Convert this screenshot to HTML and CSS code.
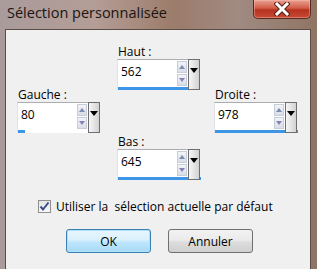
FILE: index.html
```html
<!DOCTYPE html>
<html lang="fr">
<head>
  <meta charset="UTF-8">
  <title>Sélection personnalisée</title>
  <link rel="stylesheet" href="styles.css">
</head>
<body>

  <div class="window">
    <div class="titlebar">
      <span class="title">Sélection personnalisée</span>
      <button class="close-btn" type="button">
        <svg width="16" height="14" viewBox="0 0 16 14">
          <path d="M3 2 L13 12 M13 2 L3 12" stroke="#5a1d14" stroke-width="5" stroke-linecap="square"/>
          <path d="M3 2 L13 12 M13 2 L3 12" stroke="#ffffff" stroke-width="3" stroke-linecap="square"/>
        </svg>
      </button>
    </div>

    <div class="panel">
      <div class="fields">
        <div class="field haut">
          <label for="haut">Haut :</label>
          <div class="spin">
            <div class="box">
              <input type="text" id="haut" value="562">
              <div class="arrows"><span class="up"></span><span class="down"></span></div>
            </div>
            <span class="drop"></span>
          </div>
          <div class="bar"><span style="width: 100%"></span></div>
        </div>

        <div class="field gauche">
          <label for="gauche">Gauche :</label>
          <div class="spin">
            <div class="box">
              <input type="text" id="gauche" value="80">
              <div class="arrows"><span class="up"></span><span class="down"></span></div>
            </div>
            <span class="drop"></span>
          </div>
          <div class="bar"><span style="width: 10%"></span></div>
        </div>

        <div class="field droite">
          <label for="droite">Droite :</label>
          <div class="spin">
            <div class="box">
              <input type="text" id="droite" value="978">
              <div class="arrows"><span class="up"></span><span class="down"></span></div>
            </div>
            <span class="drop"></span>
          </div>
          <div class="bar wide"><span style="width: 100%"></span></div>
        </div>

        <div class="field bas">
          <label for="bas">Bas :</label>
          <div class="spin">
            <div class="box">
              <input type="text" id="bas" value="645">
              <div class="arrows"><span class="up"></span><span class="down"></span></div>
            </div>
            <span class="drop"></span>
          </div>
          <div class="bar wide"><span style="width: 100%"></span></div>
        </div>
      </div>

      <label class="check">
        <span class="checkbox">
          <svg width="11" height="11" viewBox="0 0 11 11"><path d="M1.5 5.5 L4 8.5 L9.5 1.5" fill="none" stroke="#3b4d8a" stroke-width="2"/></svg>
        </span>
        Utiliser la&nbsp; sélection actuelle par défaut
      </label>

      <div class="buttons">
        <button type="button" class="btn default">OK</button>
        <button type="button" class="btn">Annuler</button>
      </div>
    </div>
  </div>

</body>
</html>
```

FILE: styles.css
```css
body {
  margin: 0;
  padding: 0;
  font-family: "Open Sans", "Noto Sans", sans-serif;
  font-size: 12px;
  color: #000;
}

.window {
  width: 317px;
  height: 269px;
  overflow: hidden;
  background: linear-gradient(90deg, #a99b9c 0%, #b49d96 30%, #9c7c6a 55%, #a08a82 75%, #8f7563 100%);
  display: flex;
  flex-direction: column;
}

.titlebar {
  height: 29px;
  display: flex;
  align-items: flex-start;
  justify-content: space-between;
  flex-shrink: 0;
}

.title {
  margin: 3px 0 0 7px;
  font-family: "Open Sans", sans-serif;
  font-size: 14.5px;
  color: #1a1412;
}

.close-btn {
  width: 58px;
  height: 19px;
  margin-right: 6px;
  padding: 0;
  border: 1px solid #5a2a22;
  border-top: none;
  border-radius: 0 0 5px 5px;
  background: linear-gradient(#e8a193 0%, #d25d48 45%, #b5321f 55%, #c84a33 100%);
  display: flex;
  align-items: center;
  justify-content: center;
  box-shadow: inset 0 0 0 1px rgba(255, 200, 190, 0.4);
}

.panel {
  flex: 1;
  margin: 0 6px 0 5px;
  background: #f0f0f0;
  border: 1px solid #5a4c46;
  border-bottom: none;
  display: flex;
  flex-direction: column;
}

.fields {
  display: grid;
  grid-template-columns: 100px 97px 83px;
  grid-template-rows: 43px 45px 40px;
  padding: 14px 0 0 11px;
}

.field {
  display: flex;
  flex-direction: column;
  width: 83px;
}

.field label {
  height: 15px;
  line-height: 15px;
  padding-left: 1px;
}

.haut { grid-column: 2; grid-row: 1; }
.gauche { grid-column: 1; grid-row: 2; }
.droite { grid-column: 3; grid-row: 2; }
.bas { grid-column: 2; grid-row: 3; margin-top: 2px; }

.spin {
  display: flex;
  height: 28px;
}

.box {
  flex: 1;
  display: flex;
  background: #fff;
  border: 1px solid #abadb3;
  border-right: none;
  border-bottom: none;
  border-left-color: #e2e3ea;
}

.box input {
  width: 50px;
  flex: 1;
  border: none;
  outline: none;
  padding: 3px 0 0 3px;
  align-self: flex-start;
  font-family: "Open Sans", sans-serif;
  font-size: 12px;
  background: transparent;
}

.arrows {
  width: 10px;
  margin: 1px 1px 0 0;
  display: flex;
  flex-direction: column;
  gap: 1px;
}

.arrows span {
  height: 12px;
  background: linear-gradient(#f2f4f8, #d8dde8);
  border: 1px solid #c8ced9;
  box-sizing: border-box;
  position: relative;
}

.arrows span::after {
  content: "";
  position: absolute;
  left: 1px;
  top: 3px;
  border-left: 3.5px solid transparent;
  border-right: 3.5px solid transparent;
}

.arrows .up::after { border-bottom: 4px solid #7b8db0; }
.arrows .down::after { border-top: 4px solid #8a7fb8; }

.drop {
  width: 12px;
  height: 31px;
  box-sizing: border-box;
  border: 1px solid #6e6e6e;
  background: linear-gradient(90deg, #f6f6f6, #d2d2d2);
  position: relative;
}

.drop::after {
  content: "";
  position: absolute;
  left: 1px;
  top: 8px;
  border-left: 4.5px solid transparent;
  border-right: 4.5px solid transparent;
  border-top: 5px solid #000;
}

.bar {
  height: 3px;
  width: 71px;
  background: #fff;
  border-left: 1px solid #e2e3ea;
}

.bar.wide {
  width: 83px;
}

.bar span {
  display: block;
  height: 3px;
  background: #3d95e5;
}

.check {
  display: flex;
  align-items: center;
  gap: 5px;
  margin: 27px 0 0 32px;
  height: 15px;
}

.checkbox {
  width: 13px;
  height: 13px;
  box-sizing: border-box;
  border: 1px solid #8f8f8f;
  background: linear-gradient(#e4e4e4, #f8f8f8);
  display: flex;
  align-items: center;
  justify-content: center;
}

.buttons {
  display: flex;
  gap: 17px;
  margin: 15px 0 0 60px;
}

.btn {
  width: 85px;
  height: 24px;
  padding: 0;
  border: 1px solid #707070;
  border-radius: 3px;
  background: linear-gradient(#f2f2f2 0%, #ebebeb 45%, #dddddd 55%, #cfcfcf 100%);
  font-family: "Open Sans", sans-serif;
  font-size: 12px;
  color: #000;
}

.btn.default {
  border-color: #3c7fb1;
  background: linear-gradient(#eaf6fd 0%, #d9f0fc 45%, #bee6fd 55%, #a7d9f5 100%);
  box-shadow: inset 0 0 0 1px #aee1fb;
}
```
